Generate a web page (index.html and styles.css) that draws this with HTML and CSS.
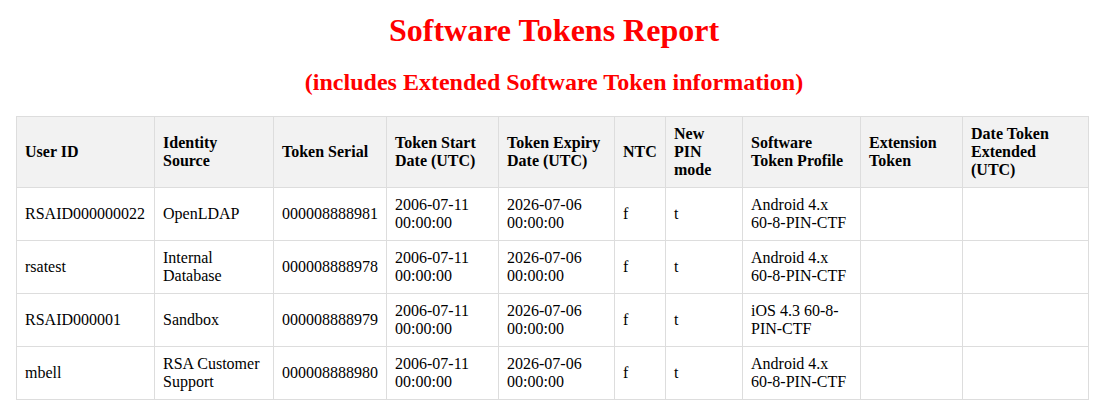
FILE: index.html
```html
<!DOCTYPE html>
<html>
<head>
<meta charset="utf-8">
<title>Software Tokens Report</title>
<link rel="stylesheet" href="styles.css">
</head>
<body>
<h1 class="title">Software Tokens Report</h1>
<h2 class="subtitle">(includes Extended Software Token information)</h2>
<table class="report">
<thead>
<tr>
<th class="c1">User ID</th>
<th class="c2">Identity Source</th>
<th class="c3">Token Serial</th>
<th class="c4">Token Start Date (UTC)</th>
<th class="c5">Token Expiry Date (UTC)</th>
<th class="c6">NTC</th>
<th class="c7">New PIN mode</th>
<th class="c8">Software Token Profile</th>
<th class="c9">Extension Token</th>
<th class="c10">Date Token Extended (UTC)</th>
</tr>
</thead>
<tbody>
<tr>
<td>RSAID000000022</td><td>OpenLDAP</td><td>000008888981</td><td>2006-07-11 00:00:00</td><td>2026-07-06 00:00:00</td><td>f</td><td>t</td><td>Android 4.x 60-8-PIN-CTF</td><td></td><td></td>
</tr>
<tr>
<td>rsatest</td><td>Internal Database</td><td>000008888978</td><td>2006-07-11 00:00:00</td><td>2026-07-06 00:00:00</td><td>f</td><td>t</td><td>Android 4.x 60-8-PIN-CTF</td><td></td><td></td>
</tr>
<tr>
<td>RSAID000001</td><td>Sandbox</td><td>000008888979</td><td>2006-07-11 00:00:00</td><td>2026-07-06 00:00:00</td><td>f</td><td>t</td><td>iOS 4.3 60-8-PIN-CTF</td><td></td><td></td>
</tr>
<tr>
<td>mbell</td><td>RSA Customer Support</td><td>000008888980</td><td>2006-07-11 00:00:00</td><td>2026-07-06 00:00:00</td><td>f</td><td>t</td><td>Android 4.x 60-8-PIN-CTF</td><td></td><td></td>
</tr>
</tbody>
</table>
</body>
</html>
```
FILE: styles.css
```css
body {
  margin: 8px;
  font-family: "Liberation Serif", "Times New Roman", serif;
  background: #fff;
  color: #000;
}
.title {
  color: #ff0000;
  text-align: center;
  font-size: 32px;
  font-weight: bold;
  margin: 4px 0 0;
  line-height: 37px;
}
.subtitle {
  color: #ff0000;
  text-align: center;
  font-size: 24px;
  font-weight: bold;
  margin: 19px 0 0;
  line-height: 28px;
}
.report {
  border-collapse: collapse;
  table-layout: fixed;
  margin: 20px 0 0 8px;
  width: 1073px;
  font-size: 16px;
}
.report th,
.report td {
  border: 1px solid #dddddd;
  padding: 8px;
  text-align: left;
  vertical-align: middle;
  line-height: 18px;
}
.report th {
  background: #f2f2f2;
  font-weight: bold;
}
.c1 { width: 121px; }
.c2 { width: 102px; }
.c3 { width: 96px; }
.c4 { width: 95px; }
.c5 { width: 99px; }
.c6 { width: 34px; }
.c7 { width: 60px; }
.c8 { width: 101px; }
.c9 { width: 85px; }
.c10 { width: 109px; }
```
